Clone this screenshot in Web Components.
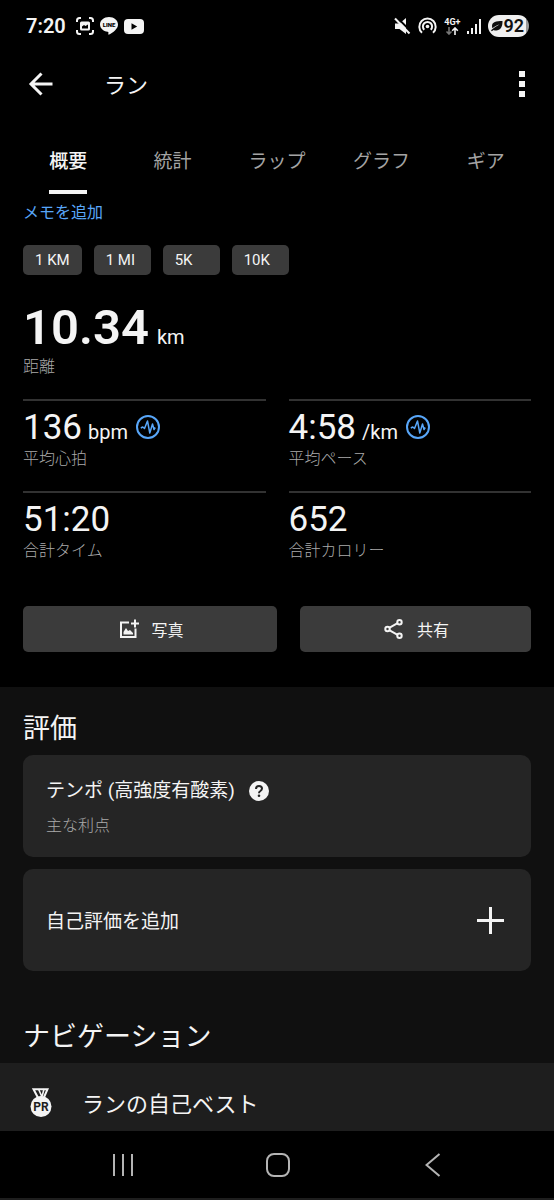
<!DOCTYPE html>
<html lang="ja">
<head>
<meta charset="utf-8">
<meta name="viewport" content="width=device-width, initial-scale=1">
<title>ラン</title>
<style>
  html { background: #000; }
  body {
    margin: 0;
    min-height: 100vh;
    display: flex;
    flex-direction: column;
    background: #000;
    color: #f4f4f4;
    font-family: Roboto, "Noto Sans CJK JP", sans-serif;
    font-size: 16px;
    --accent: #58a6f8;
    --muted: #aaa;
    --control: #3b3b3b;
    --card: #252525;
    --gutter: 23px;
  }
</style>
</head>
<body>
<status-bar></status-bar>
<app-bar>ラン</app-bar>
<tab-bar>
  <tab-item selected>概要</tab-item>
  <tab-item>統計</tab-item>
  <tab-item>ラップ</tab-item>
  <tab-item>グラフ</tab-item>
  <tab-item>ギア</tab-item>
</tab-bar>
<activity-summary>
  <memo-link slot="memo">メモを追加</memo-link>
  <split-chip slot="chips">1 KM</split-chip>
  <split-chip slot="chips">1 MI</split-chip>
  <split-chip slot="chips">5K</split-chip>
  <split-chip slot="chips">10K</split-chip>
  <stat-metric slot="hero" large value="10.34" unit="km">距離</stat-metric>
  <stat-metric slot="stats" value="136" unit="bpm" chart>平均心拍</stat-metric>
  <stat-metric slot="stats" value="4:58" unit="/km" chart>平均ペース</stat-metric>
  <stat-metric slot="stats" value="51:20">合計タイム</stat-metric>
  <stat-metric slot="stats" value="652">合計カロリー</stat-metric>
  <action-button slot="actions" icon="photo" style="flex: 11">写真</action-button>
  <action-button slot="actions" icon="share" style="flex: 10">共有</action-button>
</activity-summary>
<detail-panel>
  <section-title>評価</section-title>
  <card-stack>
    <benefit-card>テンポ (高強度有酸素)<span slot="note">主な利点</span></benefit-card>
    <add-card>自己評価を追加</add-card>
  </card-stack>
  <section-title spaced>ナビゲーション</section-title>
  <nav-row>ランの自己ベスト</nav-row>
</detail-panel>
<system-nav></system-nav>

<script>
const RESET = `
  *, *::before, *::after { box-sizing: border-box; }
  button { margin: 0; padding: 0; border: 0; background: none; color: inherit; font: inherit; text-align: inherit; }
  a { color: inherit; text-decoration: none; }
  svg { display: block; flex: none; }
`;

function define(name, css, html) {
  customElements.define(name, class extends HTMLElement {
    constructor() {
      super();
      const body = typeof html === 'function' ? html(this) : html;
      this.attachShadow({ mode: 'open' }).innerHTML = `<style>${RESET}${css}</style>${body}`;
    }
  });
}

define('status-bar', `
  :host { display: flex; justify-content: space-between; align-items: center; height: 52px; padding: 0 25px 0 26px; }
  .group { display: flex; align-items: center; }
  .left { gap: 6px; }
  .right { gap: 7px; }
  time { font-size: 20px; line-height: 24px; font-weight: 600; margin-right: 4px; }
  .net { display: flex; flex-direction: column; align-items: center; font-size: 9px; line-height: 9px; font-weight: 700; }
  .battery { display: flex; align-items: center; height: 22px; padding: 0 5px 0 3px; border-radius: 11px; color: #111;
    background: linear-gradient(90deg, #f0f0f0 92%, #9a9a9a 92%); font-size: 18px; line-height: 22px; font-weight: 600; }
`, `
  <div class="group left">
    <time>7:20</time>
    <svg width="18" height="18" viewBox="0 0 18 18" fill="none" stroke="#f4f4f4" stroke-width="2">
      <path d="M1 5V3.500Q1 1 3.500 1H5M13 1h1.500Q17 1 17 3.500V5M17 13v1.500Q17 17 14.500 17H13M5 17H3.500Q1 17 1 14.500V13"/>
      <rect x="4" y="4.500" width="10" height="9" rx="1.500" fill="#f4f4f4" stroke="none"/>
      <path d="M6 11.500V9.500l2-1.500 1.500 1L12 7.500v4z" fill="#000" stroke="none"/>
    </svg>
    <svg width="18" height="18" viewBox="0 0 18 18">
      <path d="M9 0C4 0 0 3.300 0 7.500c0 3.700 3.200 6.800 7.700 7.300.9.200.8.700.6 2.200 0 .6.300.9.900.6C13 15.500 18 12 18 7.500 18 3.300 14 0 9 0z" fill="#f4f4f4"/>
      <text x="9" y="10" text-anchor="middle" font-size="6" font-weight="900" fill="#000">LINE</text>
    </svg>
    <svg width="20" height="15" viewBox="0 0 20 15"><rect width="20" height="15" rx="4" fill="#f4f4f4"/><path d="M7.500 4.200v6.600l5.700-3.300z" fill="#000"/></svg>
  </div>
  <div class="group right">
    <svg width="17" height="18" viewBox="0 0 17 18">
      <path d="M1 6.500h4.500L12 1v16l-6.500-5H1z" fill="#f4f4f4"/>
      <path d="M2.500 0L17 14.500" stroke="#000" stroke-width="2"/>
      <path d="M1 1.500l14.500 15" stroke="#f4f4f4" stroke-width="2"/>
    </svg>
    <svg width="19" height="18" viewBox="0 0 19 18" fill="none" stroke="#f4f4f4" stroke-width="2">
      <path d="M4 15.800a8.200 8.200 0 1 1 11 0M6.300 12.800a4.600 4.600 0 1 1 6.400 0"/><circle cx="9.500" cy="9.500" r="1.800" fill="#f4f4f4" stroke="none"/>
    </svg>
    <div class="net"><span>4G+</span>
      <svg width="14" height="8" viewBox="0 0 14 8" fill="none" stroke-width="1.600"><path d="M4 0v7M1.500 4.500L4 7l2.500-2.500" stroke="#777"/><path d="M10 8V1M7.200 3.800L10 1l2.800 2.800" stroke="#f4f4f4"/></svg>
    </div>
    <svg width="14" height="15" viewBox="0 0 14 15" fill="#f4f4f4"><path d="M0 12h2v3H0zM4 9h2v6H4zM8 5h2v10H8zM12 0h2v15h-2z"/></svg>
    <div class="battery">
      <svg width="12" height="12" viewBox="0 0 12 12"><path d="M11.500 1C5 1 1 2 1 6c0 1 .2 1.600.5 2.300C3.500 6.300 6 5.200 8.500 4.500 5.500 6 3 8 0 10.200l.8 1.100L2.700 10c1 .7 2.300.8 3.800.3 4.300-1.300 5-4.800 5-9.300z" fill="#111"/></svg>
      <span>92</span>
    </div>
  </div>
`);

define('app-bar', `
  :host { display: block; }
  header { display: flex; align-items: center; height: 64px; padding: 0 20px 0 28px; }
  h1 { flex: 1; margin: 0 0 0 51px; padding-top: 3px; font-size: 22px; line-height: 32px; font-weight: 400; }
`, `
  <header>
    <button aria-label="戻る"><svg width="25" height="24" viewBox="0 0 25 24" fill="none" stroke="#f4f4f4" stroke-width="3"><path d="M13.500 1.500L3 12l10.500 10.500M3 12h21.500"/></svg></button>
    <h1><slot></slot></h1>
    <button aria-label="メニュー"><svg width="24" height="28" viewBox="0 0 24 28" fill="#f4f4f4"><path d="M9 1h6v6H9zM9 11h6v6H9zM9 21h6v6H9z"/></svg></button>
  </header>
`);

define('tab-bar', `
  :host { display: block; padding: 0 16px; }
  nav { display: grid; grid-template-columns: repeat(5, 1fr); }
`, `<nav role="tablist"><slot></slot></nav>`);

define('tab-item', `
  :host { display: flex; justify-content: center; color: #a4a4a4; }
  button { padding: 32px 0 14px; border-bottom: 4px solid transparent; font-size: 19px; line-height: 28px; }
  :host([selected]) { color: #f4f4f4; font-weight: 500; }
  :host([selected]) button { border-color: #f4f4f4; }
`, el => `<button role="tab" aria-selected="${el.hasAttribute('selected')}"><slot></slot></button>`);

define('memo-link', `
  :host { display: block; color: var(--accent); font-size: 16px; line-height: 22px; }
`, `<a href="#memo"><slot></slot></a>`);

define('split-chip', `
  :host { display: block; }
  button { min-width: 57px; height: 30px; padding: 0 12px; border-radius: 5px; background: var(--control); font-size: 15px; line-height: 30px; }
`, `<button><slot></slot></button>`);

define('activity-summary', `
  :host { display: block; padding: 8px var(--gutter) 35px; }
  .chips { display: flex; gap: 12px; margin: 21px 0 25px; }
  .stats { display: grid; grid-template-columns: 1fr 1fr; column-gap: var(--gutter); margin-top: 21px; }
  .actions { display: flex; gap: var(--gutter); margin-top: var(--gutter); }
`, `
  <slot name="memo"></slot>
  <div class="chips"><slot name="chips"></slot></div>
  <slot name="hero"></slot>
  <div class="stats"><slot name="stats"></slot></div>
  <div class="actions"><slot name="actions"></slot></div>
`);

define('stat-metric', `
  :host { display: block; }
  :host(:not([large])) { border-top: 2px solid #323232; padding: 7px 0 21px; }
  .row { display: flex; align-items: baseline; gap: 6px; height: 40px; }
  .value { font-size: 35px; line-height: 40px; }
  .unit { font-size: 20px; line-height: 24px; }
  .label { color: var(--muted); font-size: 16px; line-height: 22px; font-weight: 300; }
  svg { margin-left: 2px; }
  :host([large]) .row { height: 56px; gap: 8px; }
  :host([large]) .value { font-size: 49px; line-height: 55px; font-weight: 600; }
`, el => `
  <div class="row">
    <span class="value">${el.getAttribute('value')}</span>
    ${el.hasAttribute('unit') ? `<span class="unit">${el.getAttribute('unit')}</span>` : ''}
    ${el.hasAttribute('chart') ? `<svg width="24" height="24" viewBox="0 0 24 24" fill="none" stroke="#58a6f8"><circle cx="12" cy="12" r="11" stroke-width="2"/><path d="M4.800 13l2-1 1.700 1.500L11.500 6l2.300 12 2.700-9 1.500 5.500 1.200-2" stroke-width="1.500" stroke-linejoin="round"/></svg>` : ''}
  </div>
  <div class="label"><slot></slot></div>
`);

const ICONS = {
  photo: `<svg width="20" height="20" viewBox="0 0 20 20" fill="none" stroke="#f4f4f4" stroke-width="2"><path d="M10 3.500H2V18h14.500V9.500"/><path d="M12 4.500h8M16 .5v8"/><path d="M4.500 15.500v-2.500l2.500-4 2 3 2-1 3 3v1.500z" fill="#f4f4f4" stroke="none"/></svg>`,
  share: `<svg width="20" height="20" viewBox="0 0 20 20" fill="none" stroke="#f4f4f4" stroke-width="2"><path d="M5.200 8.800L13.600 4.200M5.200 11.200l8.400 4.600"/><circle cx="3.500" cy="10" r="2.200"/><circle cx="15.500" cy="3.300" r="2.200"/><circle cx="15.500" cy="16.700" r="2.200"/></svg>`
};

define('action-button', `
  :host { display: block; }
  button { display: flex; width: 100%; height: 46px; align-items: center; justify-content: center; gap: 13px; padding-left: 2px; border-radius: 5px; background: var(--control); font-size: 16px; line-height: 22px; }
  span { padding-top: 3px; }
`, el => `<button>${ICONS[el.getAttribute('icon')]}<span><slot></slot></span></button>`);

define('detail-panel', `
  :host { display: block; flex: 1; padding-top: 22px; background: #101010; }
`, `<slot></slot>`);

define('section-title', `
  :host { display: block; padding: 0 var(--gutter) 6px; }
  :host([spaced]) { padding-top: 46px; }
  h2 { margin: 0; font-size: 27px; line-height: 40px; font-weight: 400; }
`, `<h2><slot></slot></h2>`);

define('card-stack', `
  :host { display: flex; flex-direction: column; gap: 12px; padding: 0 var(--gutter); }
`, `<slot></slot>`);

define('benefit-card', `
  :host { display: block; padding: 22px var(--gutter) 20px; border-radius: 10px; background: var(--card); }
  .title { display: flex; align-items: center; gap: 14px; font-size: 19px; line-height: 28px; }
  .note { margin-top: 10px; color: var(--muted); font-size: 16px; line-height: 22px; font-weight: 300; }
`, `
  <div class="title"><span><slot></slot></span>
    <button aria-label="ヘルプ"><svg width="20" height="20" viewBox="0 0 20 20"><circle cx="10" cy="10" r="10" fill="#f4f4f4"/><path d="M7 8q0-3 3-3t3 2.600q0 1.400-1.600 2.400Q10 10.800 10 12.300" fill="none" stroke="#252525" stroke-width="2"/><circle cx="10" cy="14.800" r="1.300" fill="#252525"/></svg></button>
  </div>
  <div class="note"><slot name="note"></slot></div>
`);

define('add-card', `
  :host { display: block; }
  button { display: flex; width: 100%; min-height: 102px; align-items: center; justify-content: space-between; padding: 0 27px 0 var(--gutter); border-radius: 10px; background: var(--card); font-size: 19px; line-height: 28px; }
  span { padding-top: 3px; }
`, `<button><span><slot></slot></span><svg width="27" height="27" viewBox="0 0 27 27"><path d="M13.500 0v27M0 13.500h27" stroke="#f4f4f4" stroke-width="3"/></svg></button>`);

define('nav-row', `
  :host { display: block; background: #1e1e1e; }
  a { display: flex; align-items: center; gap: 30px; height: 68px; padding: 12px 30px 0; font-size: 22px; line-height: 32px; }
  span { padding-top: 3px; }
`, `
  <a href="#records">
    <svg width="22" height="30" viewBox="0 0 22 30">
      <path d="M3.500 1.200h14l-3.700 8.500H8z" fill="none" stroke="#f4f4f4" stroke-width="2"/>
      <path d="M8.500 1l3.500 8M14 1l-1.800 7" stroke="#f4f4f4" stroke-width="1.600"/>
      <circle cx="11" cy="18.500" r="10.500" fill="#f4f4f4"/>
      <text x="11" y="23" text-anchor="middle" font-size="12" font-weight="700" fill="#1e1e1e">PR</text>
    </svg>
    <span><slot></slot></span>
  </a>
`);

define('system-nav', `
  :host { display: block; background: #000; border-bottom: 2px solid #1e1e1e; }
  nav { display: flex; justify-content: center; height: 67px; padding: 0 44px 0 46px; }
  button { flex: 1; display: flex; align-items: center; justify-content: center; }
`, `
  <nav>
    <button aria-label="履歴"><svg width="22" height="22" viewBox="0 0 22 22" stroke="#b4b4b4" stroke-width="2"><path d="M2 0v22M11 0v22M20 0v22"/></svg></button>
    <button aria-label="ホーム"><svg width="24" height="24" viewBox="0 0 24 24" fill="none" stroke="#b4b4b4" stroke-width="2"><rect x="1" y="1" width="22" height="22" rx="7"/></svg></button>
    <button aria-label="戻る"><svg width="16" height="24" viewBox="0 0 16 24" fill="none" stroke="#b4b4b4" stroke-width="2"><path d="M14.500 1L1.500 12l13 11"/></svg></button>
  </nav>
`);
</script>
</body>
</html>
